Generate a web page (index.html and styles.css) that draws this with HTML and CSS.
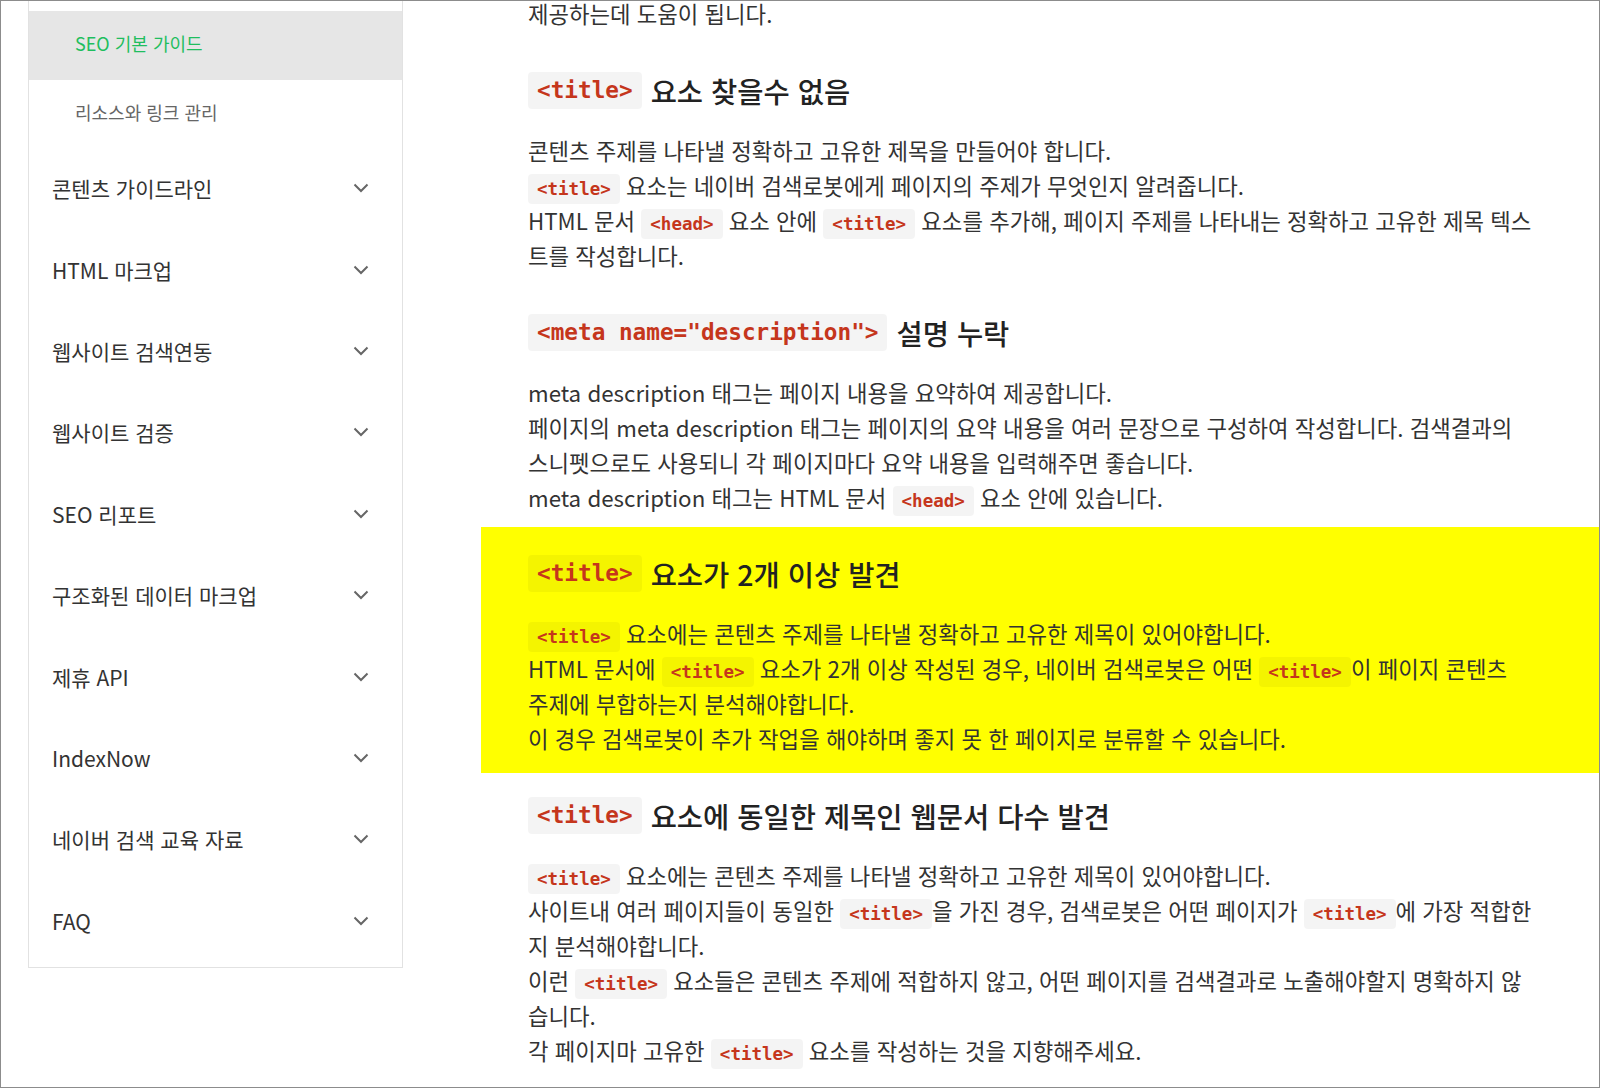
FILE: index.html
```html
<!DOCTYPE html>
<html lang="ko">
<head>
<meta charset="UTF-8">
<meta name="viewport" content="width=device-width, initial-scale=1.0">
<title>SEO 기본 가이드</title>
<link rel="stylesheet" href="styles.css">
</head>
<body>
<div class="screen">
  <aside class="side">
    <nav class="menu">
      <ul class="sub-menu">
        <li class="on">SEO 기본 가이드</li>
        <li>리소스와 링크 관리</li>
      </ul>
      <ul class="main-menu">
        <li><span>콘텐츠 가이드라인</span><svg class="chev" viewBox="0 0 16 10"><path d="M1.5 1.5 8 8l6.5-6.5"/></svg></li>
        <li><span>HTML 마크업</span><svg class="chev" viewBox="0 0 16 10"><path d="M1.5 1.5 8 8l6.5-6.5"/></svg></li>
        <li><span>웹사이트 검색연동</span><svg class="chev" viewBox="0 0 16 10"><path d="M1.5 1.5 8 8l6.5-6.5"/></svg></li>
        <li><span>웹사이트 검증</span><svg class="chev" viewBox="0 0 16 10"><path d="M1.5 1.5 8 8l6.5-6.5"/></svg></li>
        <li><span>SEO 리포트</span><svg class="chev" viewBox="0 0 16 10"><path d="M1.5 1.5 8 8l6.5-6.5"/></svg></li>
        <li><span>구조화된 데이터 마크업</span><svg class="chev" viewBox="0 0 16 10"><path d="M1.5 1.5 8 8l6.5-6.5"/></svg></li>
        <li><span>제휴 API</span><svg class="chev" viewBox="0 0 16 10"><path d="M1.5 1.5 8 8l6.5-6.5"/></svg></li>
        <li><span>IndexNow</span><svg class="chev" viewBox="0 0 16 10"><path d="M1.5 1.5 8 8l6.5-6.5"/></svg></li>
        <li><span>네이버 검색 교육 자료</span><svg class="chev" viewBox="0 0 16 10"><path d="M1.5 1.5 8 8l6.5-6.5"/></svg></li>
        <li><span>FAQ</span><svg class="chev" viewBox="0 0 16 10"><path d="M1.5 1.5 8 8l6.5-6.5"/></svg></li>
      </ul>
    </nav>
  </aside>

  <main class="doc">
    <p class="lead">제공하는데 도움이 됩니다.</p>

    <section class="item">
      <h3><code>&lt;title&gt;</code> 요소 찾을수 없음</h3>
      <p>콘텐츠 주제를 나타낼 정확하고 고유한 제목을 만들어야 합니다.<br>
      <code>&lt;title&gt;</code> 요소는 네이버 검색로봇에게 페이지의 주제가 무엇인지 알려줍니다.<br>
      HTML 문서 <code>&lt;head&gt;</code> 요소 안에 <code>&lt;title&gt;</code> 요소를 추가해, 페이지 주제를 나타내는 정확하고 고유한 제목 텍스트를 작성합니다.</p>
    </section>

    <section class="item">
      <h3><code>&lt;meta name="description"&gt;</code> 설명 누락</h3>
      <p>meta description 태그는 페이지 내용을 요약하여 제공합니다.<br>
      페이지의 meta description 태그는 페이지의 요약 내용을 여러 문장으로 구성하여 작성합니다. 검색결과의 스니펫으로도 사용되니 각 페이지마다 요약 내용을 입력해주면 좋습니다.<br>
      meta description 태그는 HTML 문서 <code>&lt;head&gt;</code> 요소 안에 있습니다.</p>
    </section>

    <section class="item marked">
      <h3><code>&lt;title&gt;</code> 요소가 2개 이상 발견</h3>
      <p><code>&lt;title&gt;</code> 요소에는 콘텐츠 주제를 나타낼 정확하고 고유한 제목이 있어야합니다.<br>
      HTML 문서에 <code>&lt;title&gt;</code> 요소가 2개 이상 작성된 경우, 네이버 검색로봇은 어떤 <code>&lt;title&gt;</code>이 페이지 콘텐츠 주제에 부합하는지 분석해야합니다.<br>
      이 경우 검색로봇이 추가 작업을 해야하며 좋지 못 한 페이지로 분류할 수 있습니다.</p>
    </section>

    <section class="item">
      <h3><code>&lt;title&gt;</code> 요소에 동일한 제목인 웹문서 다수 발견</h3>
      <p><code>&lt;title&gt;</code> 요소에는 콘텐츠 주제를 나타낼 정확하고 고유한 제목이 있어야합니다.<br>
      사이트내 여러 페이지들이 동일한 <code>&lt;title&gt;</code>을 가진 경우, 검색로봇은 어떤 페이지가 <code>&lt;title&gt;</code>에 가장 적합한지 분석해야합니다.<br>
      이런 <code>&lt;title&gt;</code> 요소들은 콘텐츠 주제에 적합하지 않고, 어떤 페이지를 검색결과로 노출해야할지 명확하지 않습니다.<br>
      각 페이지마 고유한 <code>&lt;title&gt;</code> 요소를 작성하는 것을 지향해주세요.</p>
    </section>
  </main>
</div>
</body>
</html>
```

FILE: styles.css
```css
* {
  box-sizing: border-box;
}

html, body {
  margin: 0;
  padding: 0;
  background: #fff;
}

body {
  font-family: "Noto Sans CJK KR", "Noto Sans", sans-serif;
  color: #333;
}

.screen {
  display: flex;
  height: 1088px;
  border: 1px solid #8c8c8c;
  overflow: hidden;
}

/* left menu */
.side {
  width: 480px;
  flex: none;
  padding-left: 27px;
}

.menu {
  width: 375px;
  padding: 10px 0 4px;
  border: 1px solid #e2e2e2;
  border-top: none;
  background: #fff;
}

.menu ul {
  list-style: none;
  margin: 0;
  padding: 0;
}

.sub-menu li {
  height: 69px;
  display: flex;
  align-items: center;
  padding: 0 0 5px 46px;
  font-size: 18px;
  color: #666;
}

.sub-menu li.on {
  background: #e6e6e6;
  color: #1fbe5e;
}

.main-menu li {
  height: 81.4px;
  display: flex;
  align-items: center;
  justify-content: space-between;
  padding: 0 33px 3px 23px;
  font-size: 21px;
  color: #333;
}

.chev {
  width: 16px;
  height: 10px;
  fill: none;
  stroke: #666;
  stroke-width: 2;
}

/* document */
.doc {
  flex: 1;
  padding: 0 67px 0 47px;
  font-size: 22.3px;
  line-height: 35px;
}

.doc p {
  margin: 0;
}

.lead {
  margin-top: -5px !important;
}

.item {
  padding-top: 41px;
}

.item h3 {
  display: flex;
  align-items: center;
  gap: 9px;
  margin: 0 0 24px 0;
  font-size: 28.5px;
  font-weight: 500;
  line-height: 37px;
  color: #222;
}

.item h3 code {
  font-size: 22.7px;
  line-height: 37px;
  padding: 0 9px;
}

code {
  font-family: "DejaVu Sans Mono", "Liberation Mono", monospace;
  font-weight: 700;
  font-size: 17.5px;
  line-height: 20px;
  color: #c5361c;
  background: rgba(0, 0, 0, 0.045);
  border-radius: 4px;
  padding: 5px 9px;
}

.marked {
  margin: 12px -67px -17px -47px;
  padding: 28px 67px 17px 47px;
  background: #ffff00;
}
```
